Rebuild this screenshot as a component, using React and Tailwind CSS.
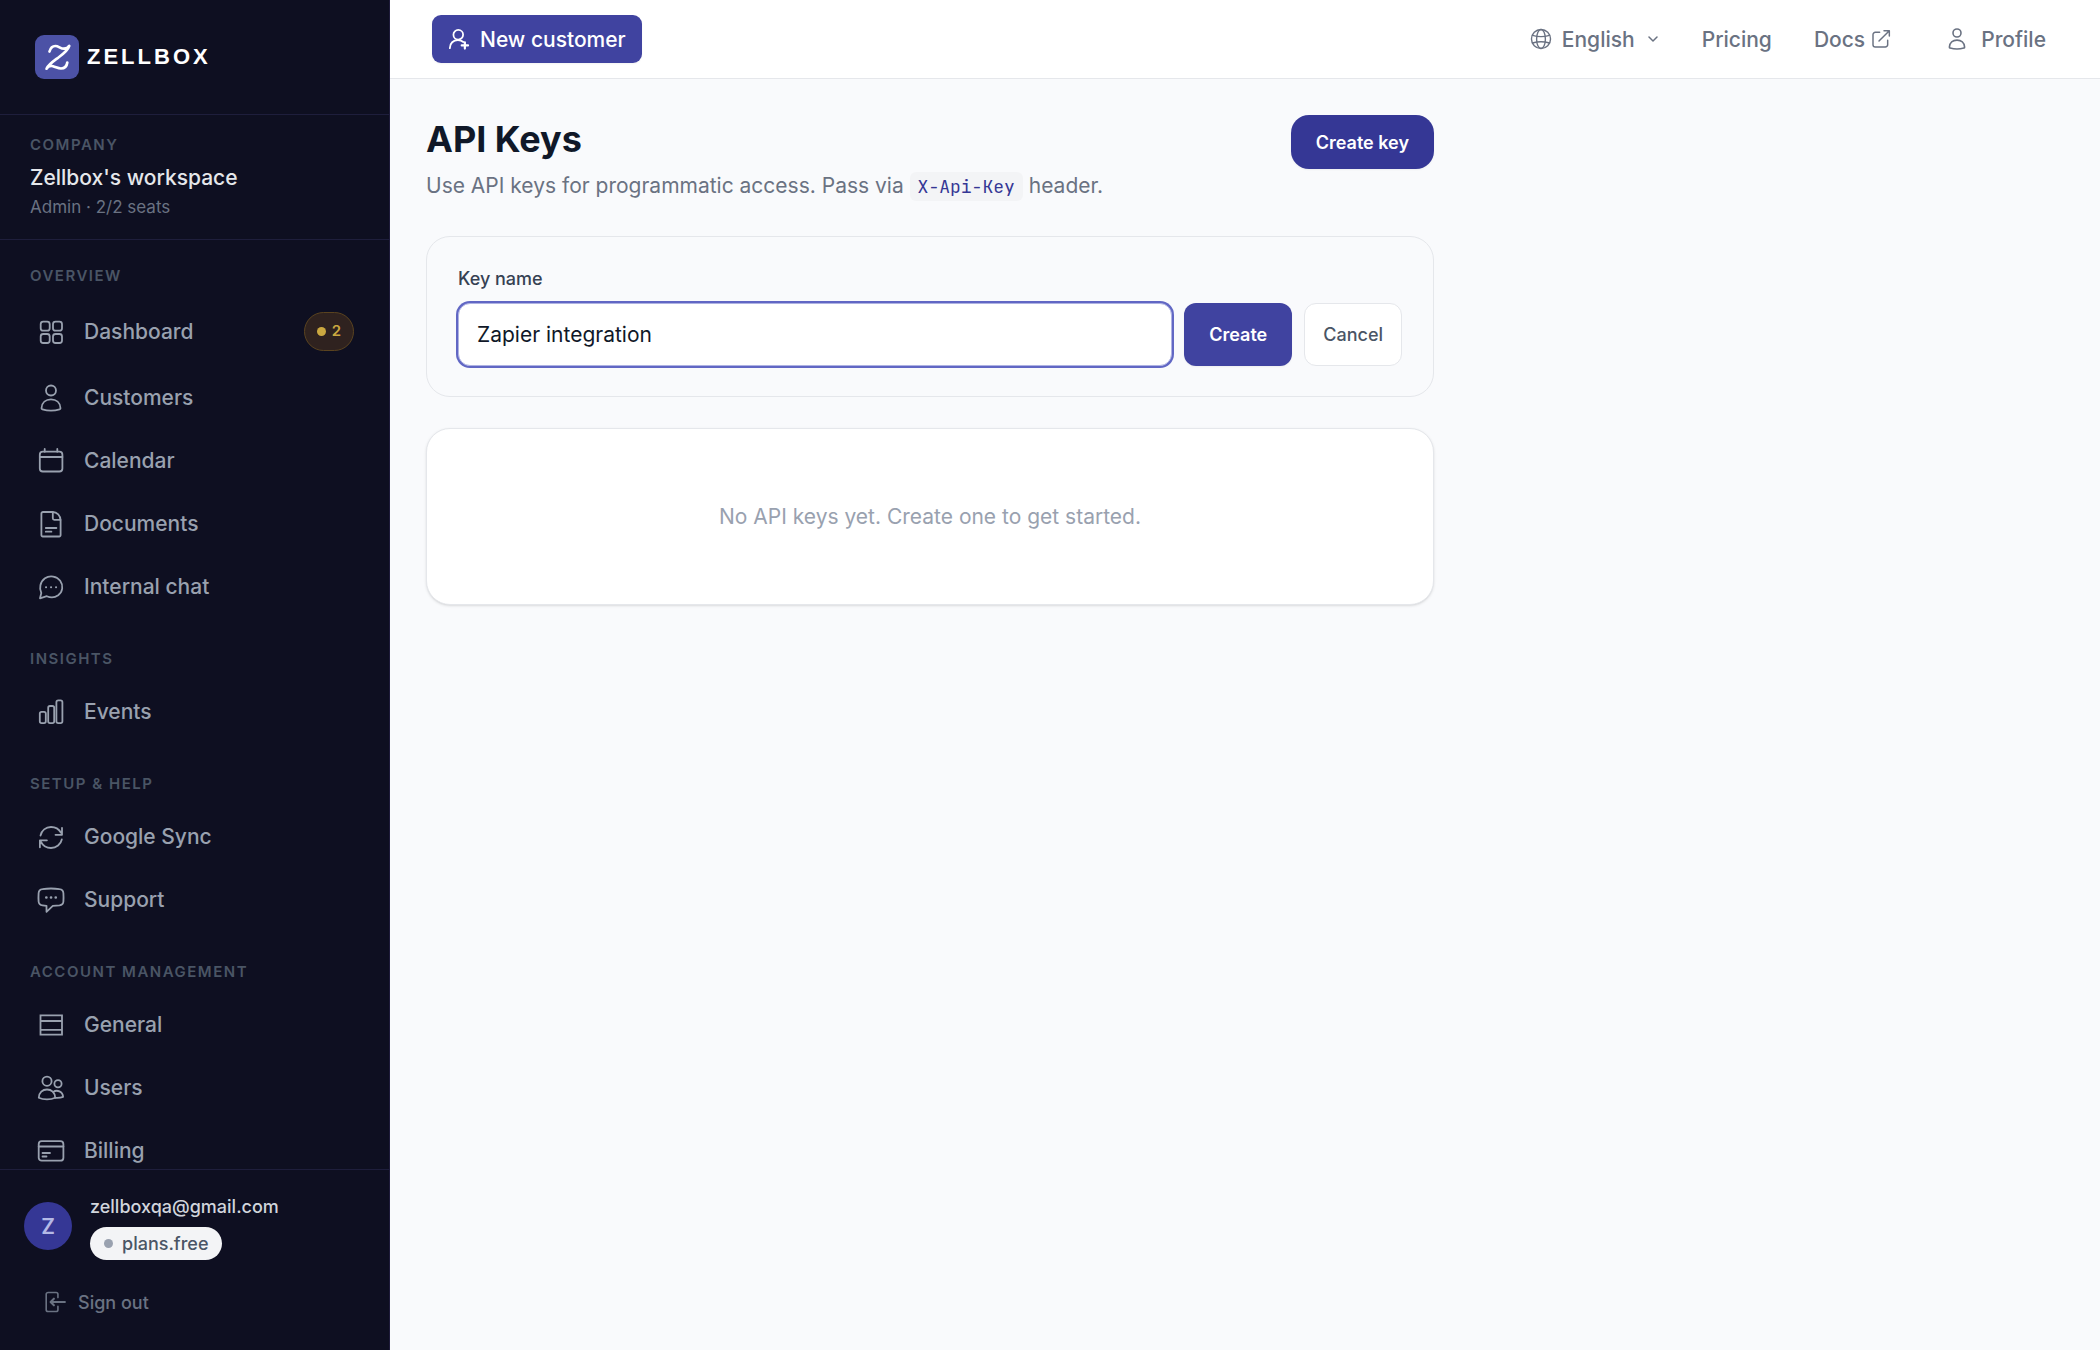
import { useState } from 'react'

const icons = {
  dashboard: (
    <>
      <rect x="4.7" y="4.7" width="9" height="9" rx="2.5" />
      <rect x="17" y="4.7" width="9" height="9" rx="2.5" />
      <rect x="4.7" y="17" width="9" height="9" rx="2.5" />
      <rect x="17" y="17" width="9" height="9" rx="2.5" />
    </>
  ),
  user: (
    <>
      <circle cx="15" cy="7.5" r="5" />
      <path d="M5.500 25.200C5.800 19.600 9.800 16.400 15 16.400s9.200 3.200 9.500 8.800c0 .6-.3 1-.9 1.100-5.500 1.600-11.700 1.600-17.200 0-.6-.1-.9-.5-.9-1.100z" />
    </>
  ),
  calendar: (
    <>
      <rect x="3.8" y="5.7" width="22.6" height="19.8" rx="3" />
      <path d="M3.8 11h22.6M8.7 3v2.7M21.3 3v2.7" />
    </>
  ),
  document: (
    <>
      <path d="M16.5 3H7a1.600 1.600 0 0 0-1.600 1.600V26.100A1.400 1.400 0 0 0 6.800 27.500h16.400a1.400 1.400 0 0 0 1.400-1.400V11.500C24.600 6.500 21 3 16.500 3z" />
      <path d="M16.800 3v6.300a1.500 1.500 0 0 0 1.500 1.500h6.200M9.800 19h10.600M9.800 22.700h5.600" />
    </>
  ),
  chat: (
    <>
      <path d="M4 26.300l1.300-5.300C3 16.500 4 9.800 9 6.300c5-3.400 11.800-2 15.200 2.500 3.400 4.700 2.600 11-2 14.500-3.600 2.500-7.800 2.500-11.400.9L4 26.300z" />
      <path d="M10 15.200h.1M15 15.200h.1M20 15.200h.1" strokeWidth="2" />
    </>
  ),
  chart: (
    <>
      <rect x="3.8" y="14.8" width="6" height="11.3" rx="1.8" />
      <rect x="12.2" y="9" width="6" height="17.1" rx="1.8" />
      <rect x="20.4" y="3.4" width="6" height="22.7" rx="1.8" />
    </>
  ),
  sync: (
    <>
      <path d="M4.500 13.500C5.500 8.500 9.800 5 15 5c4.400 0 8 2.200 10 5.700M26 5.800v7h-6.500" />
      <path d="M25.800 17.500c-1 4.800-5.400 8.500-10.800 8.500-4.300 0-8-2.200-10-6M3.900 25.300v-7h7" />
    </>
  ),
  support: (
    <>
      <path d="M6.500 4.200c5.600-.9 11.400-.9 17 0 2.400.3 3.800 1.800 3.900 4 .2 3 .2 5.500 0 8.300-.1 2.400-1.500 3.500-3.900 3.800l-6.700.5-6.300 6v-6l-4-.5c-2.400-.3-3.700-1.400-3.900-3.800-.2-2.800-.2-5.300 0-8.300.1-2.200 1.500-3.700 3.900-4z" />
      <path d="M10.300 12.500h.1M15 12.500h.1M19.700 12.500h.1" strokeWidth="2.6" />
    </>
  ),
  panel: (
    <path d="M4.500 5.400h21.500v19.200h-21.500zM4.500 11h21.500M4.500 19.800h21.500" strokeLinejoin="miter" />
  ),
  users: (
    <>
      <circle cx="11" cy="8.2" r="4.6" />
      <circle cx="22" cy="10.8" r="3.6" />
      <path d="M2.800 24.700c.2-5 3.700-8.200 8.200-8.200s8 3.200 8.200 8.200c-4.600 2.300-11.800 2.300-16.400 0z" />
      <path d="M17.300 19c3.600-2.700 9.500-.5 9.800 4.900-2.300 1-5 1.200-7.900 1" />
    </>
  ),
  card: (
    <>
      <rect x="2.7" y="5.2" width="24.7" height="19.5" rx="3" />
      <path d="M2.700 10.500h24.700M6.500 17h7.500M6.500 20.500h4" />
    </>
  ),
  userPlus: (
    <>
      <circle cx="14" cy="9.200" r="6.600" />
      <path d="M2.500 27.500C2.500 20.500 7.300 16.600 13.500 16.600c3 0 5.500.9 7.400 2.500" />
      <path d="M23 19.500v8.500M18.700 23.700h8.600" strokeWidth="3" />
    </>
  ),
  globe: (
    <>
      <circle cx="15" cy="15" r="13" />
      <ellipse cx="15" cy="15" rx="6" ry="13" />
      <path d="M3.500 10c7 2.200 16 2.200 23 0M3.500 20.500c7-2.200 16-2.200 23 0" />
    </>
  ),
  external: (
    <>
      <path d="M13 5H6.500A3.500 3.500 0 0 0 3 8.500v15A3.500 3.500 0 0 0 6.500 27h15a3.500 3.500 0 0 0 3.500-3.500V17" />
      <path d="M12 18L27.500 2.500M19.500 2.500h8v8" />
    </>
  ),
  signOut: (
    <>
      <path d="M19 9V4.500A2.500 2.500 0 0 0 16.500 2h-11A2.500 2.500 0 0 0 3 4.500v21A2.500 2.500 0 0 0 5.500 28h11a2.500 2.500 0 0 0 2.500-2.500V21" />
      <path d="M28.500 15H9.500M13.500 10.500L9 15l4.500 4.500" strokeWidth="2.8" />
    </>
  ),
  chevron: <path d="M3 9l12 12L27 9" />,
}

function Icon({ name, className = 'size-[30px]', stroke = 1.8 }) {
  return (
    <svg
      viewBox="0 0 30 30"
      fill="none"
      stroke="currentColor"
      strokeWidth={stroke}
      strokeLinecap="round"
      strokeLinejoin="round"
      aria-hidden="true"
      className={`shrink-0 ${className}`}
    >
      {icons[name]}
    </svg>
  )
}

const sections = [
  {
    title: 'Overview',
    items: [
      { label: 'Dashboard', icon: 'dashboard', badge: 2 },
      { label: 'Customers', icon: 'user' },
      { label: 'Calendar', icon: 'calendar' },
      { label: 'Documents', icon: 'document' },
      { label: 'Internal chat', icon: 'chat' },
    ],
  },
  {
    title: 'Insights',
    items: [{ label: 'Events', icon: 'chart' }],
  },
  {
    title: 'Setup & Help',
    items: [
      { label: 'Google Sync', icon: 'sync' },
      { label: 'Support', icon: 'support' },
    ],
  },
  {
    title: 'Account Management',
    items: [
      { label: 'General', icon: 'panel' },
      { label: 'Users', icon: 'users' },
      { label: 'Billing', icon: 'card' },
    ],
  },
]

function Logo() {
  return (
    <a href="#" className="flex items-center gap-2">
      <svg viewBox="0 0 44 44" className="size-11" aria-hidden="true">
        <rect width="44" height="44" rx="9" fill="#4c52a6" />
        <path
          d="M14.500 16.500c1-3.500 3-5.500 5.800-5.500 3.500 0 5 2.700 8.700 2.700 2.500 0 4.300-1.200 5.300-2.900-1.500 5-6 8-12 12.500-5 3.700-9 6.500-10.800 10.400 1.600-2.500 4-3.200 6.500-2.500 3 .8 5 2.300 8 2.300 3.500 0 5.800-2.200 6.300-6"
          fill="none"
          stroke="#fff"
          strokeWidth="2.7"
          strokeLinecap="round"
          strokeLinejoin="round"
        />
      </svg>
      <span className="font-['Liberation_Sans',Arial,sans-serif] text-[22px] leading-8 font-bold tracking-[3px] text-white">
        ZELLBOX
      </span>
    </a>
  )
}

function Sidebar() {
  return (
    <aside className="flex h-full w-[390px] shrink-0 flex-col border-r border-[#1e1b3a] bg-[#0e0f21]">
      <div className="border-b border-[#1e1e3c] px-[35px] py-[35px]">
        <Logo />
      </div>

      {/* Workspace */}
      <div className="border-b border-[#1e1e3c] px-[30px] pt-[18px] pb-5">
        <p className="text-[15px] leading-6 font-semibold tracking-widest text-gray-600 uppercase">Company</p>
        <p className="mt-1 text-[21px] leading-[33px] font-medium text-gray-200">Zellbox's workspace</p>
        <p className="mt-px text-[17px] leading-6 text-gray-500">Admin · 2/2 seats</p>
      </div>

      {/* Navigation */}
      <nav className="min-h-0 flex-1 overflow-hidden pt-6 pr-[17px] pl-[18px]">
        {sections.map((section) => (
          <div key={section.title} className="mb-8">
            <h2 className="mb-3 px-3 text-[15px] leading-6 font-semibold tracking-widest text-gray-600 uppercase">
              {section.title}
            </h2>
            <ul className="flex flex-col gap-[6px]">
              {section.items.map((item) => (
                <li key={item.label}>
                  <a href="#" className="flex min-h-[57px] items-center gap-[18px] px-[18px] py-3 text-gray-400">
                    <Icon name={item.icon} />
                    <span className="flex-1 text-[21px] leading-[33px] font-medium">{item.label}</span>
                    {item.badge && (
                      <span className="flex h-[39px] items-center gap-[6px] rounded-full border border-[#5a431f] bg-[#2f221f] px-3 text-[15px] font-semibold text-[#cba840]">
                        <span className="size-[9px] rounded-full bg-[#cba840]" />
                        {item.badge}
                      </span>
                    )}
                  </a>
                </li>
              ))}
            </ul>
          </div>
        ))}
      </nav>

      {/* Account */}
      <div className="border-t border-[#1e1e3c] px-6 pt-[22px] pb-6">
        <div className="flex items-center gap-[18px]">
          <span className="flex size-12 items-center justify-center rounded-full bg-[#353795] text-[21px] leading-[33px] font-semibold text-[#b4b9e6]">
            Z
          </span>
          <div className="flex flex-col items-start gap-[6px]">
            <p className="text-[18px] leading-[29px] font-medium text-gray-300">zellboxqa@gmail.com</p>
            <span className="flex h-[33px] items-center gap-[9px] rounded-full bg-gray-100 px-[14px] text-[18px] font-medium text-gray-600">
              <span className="size-[9px] rounded-full bg-gray-400" />
              plans.free
            </span>
          </div>
        </div>
        <button type="button" className="mt-[18px] flex h-12 items-center gap-3 px-5 text-[18px] font-medium text-gray-500">
          <Icon name="signOut" className="size-[22px]" stroke={2.2} />
          Sign out
        </button>
      </div>
    </aside>
  )
}

function Topbar() {
  return (
    <header className="flex h-[79px] shrink-0 items-center justify-between border-b border-gray-200 bg-white pr-[54px] pl-[42px] text-[21px] leading-[33px] font-medium text-gray-500">
      <button
        type="button"
        className="flex h-12 items-center gap-[10px] rounded-[9px] bg-[#4043a0] px-4 text-white shadow-xs"
      >
        <Icon name="userPlus" className="size-[22px]" stroke={2.4} />
        New customer
      </button>

      <div className="flex items-center">
        <button type="button" className="mr-[44px] flex items-center">
          <Icon name="globe" className="mr-[10px] size-[22px]" stroke={1.9} />
          English
          <Icon name="chevron" className="ml-[13px] size-[10px]" stroke={4.5} />
        </button>
        <a href="#" className="mr-[42px]">Pricing</a>
        <a href="#" className="mr-[54px] flex items-center gap-[6px]">
          Docs
          <Icon name="external" className="size-5" stroke={2.2} />
        </a>
        <a href="#" className="flex items-center gap-3">
          <Icon name="user" className="size-6" stroke={2} />
          Profile
        </a>
      </div>
    </header>
  )
}

function ApiKeys() {
  const [name, setName] = useState('Zapier integration')

  return (
    <main className="flex-1 overflow-hidden px-9 py-9">
      <div className="max-w-[1008px]">
        <div className="mb-[33px] flex items-start justify-between">
          <div>
            <h1 className="text-[36px] leading-[48px] font-bold text-gray-900">API Keys</h1>
            <p className="mt-[6px] text-[21px] leading-[33px] text-gray-500">
              Use API keys for programmatic access. Pass via{' '}
              <code className="rounded-md bg-gray-100 px-2 py-[3px] font-['JetBrains_Mono','Liberation_Mono',monospace] text-[18px] text-[#353795]">
                X-Api-Key
              </code>{' '}
              header.
            </p>
          </div>
          <button
            type="button"
            className="h-[54px] rounded-[18px] bg-[#353795] px-[25px] text-[18px] font-semibold text-white shadow-xs"
          >
            Create key
          </button>
        </div>

        {/* New key form */}
        <form
          onSubmit={(e) => e.preventDefault()}
          className="mb-[31px] rounded-3xl border border-gray-200 px-[31px] pt-[31px] pb-[30px]"
        >
          <label htmlFor="key-name" className="mb-[13px] block text-[18px] leading-[22px] font-medium text-gray-700">
            Key name
          </label>
          <div className="flex gap-3">
            <input
              id="key-name"
              type="text"
              value={name}
              onChange={(e) => setName(e.target.value)}
              className="h-[63px] min-w-0 flex-1 rounded-xl border border-[#aeb2e3] bg-white px-[18px] text-[21px] text-gray-900 ring-2 ring-[#6167c4] outline-none"
            />
            <button
              type="submit"
              className="rounded-xl bg-[#4043a0] px-[25px] text-[18px] font-semibold text-white shadow-xs"
            >
              Create
            </button>
            <button
              type="button"
              className="rounded-xl border border-gray-200 bg-white px-[18px] text-[18px] font-medium text-gray-600"
            >
              Cancel
            </button>
          </div>
        </form>

        <div className="rounded-3xl border border-gray-200 bg-white px-6 py-[71px] text-center text-[21px] leading-[33px] text-gray-400 shadow-sm">
          No API keys yet. Create one to get started.
        </div>
      </div>
    </main>
  )
}

function App() {
  return (
    <div className="flex h-screen bg-[#f9fafc] font-['Inter',sans-serif]">
      <Sidebar />
      <div className="flex min-w-0 flex-1 flex-col">
        <Topbar />
        <ApiKeys />
      </div>
    </div>
  )
}

export default App
